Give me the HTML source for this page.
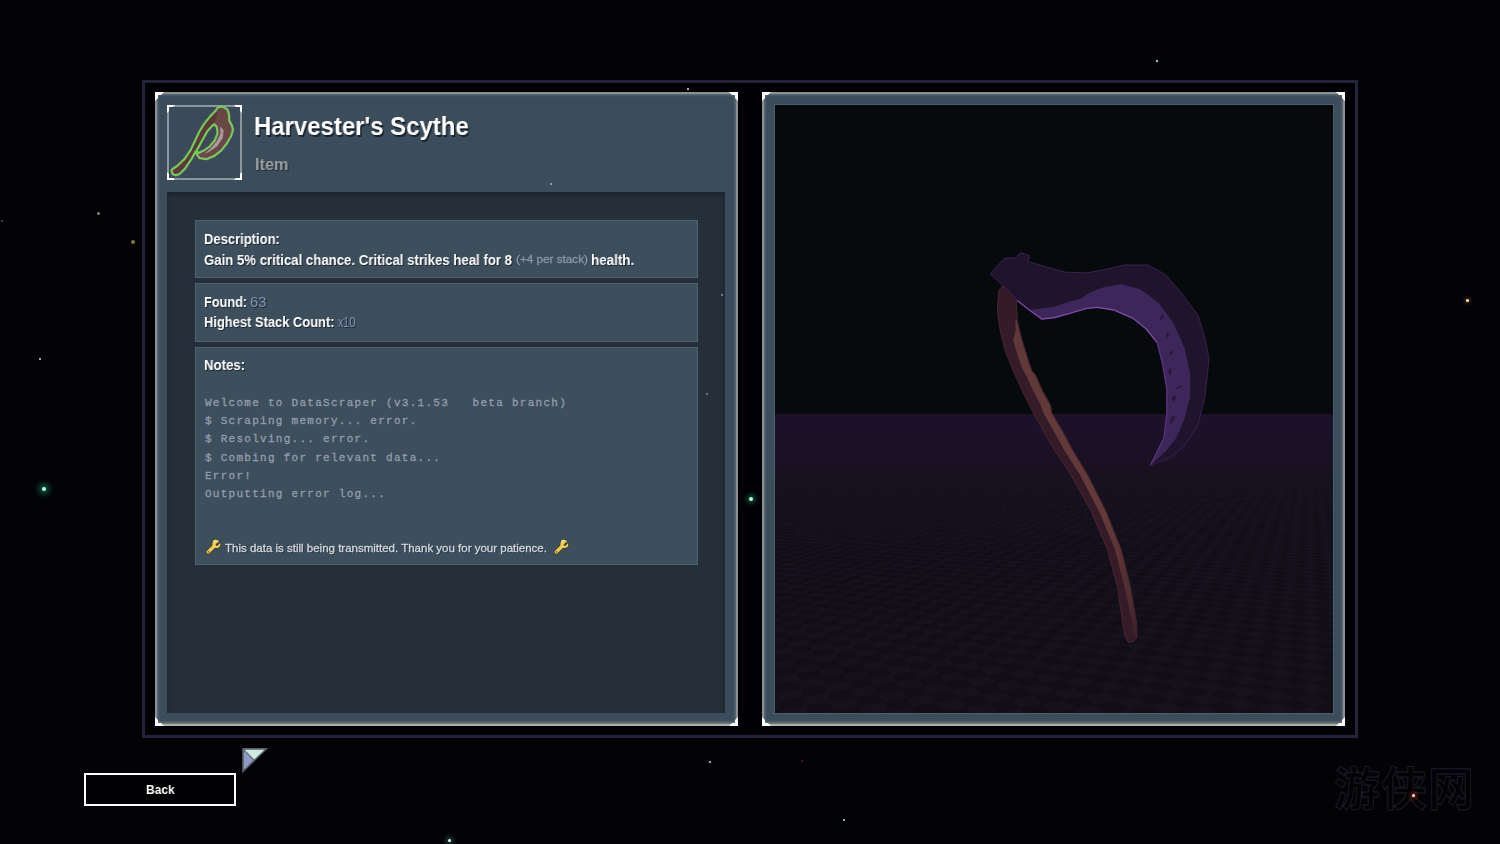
<!DOCTYPE html>
<html lang="en">
<head>
<meta charset="utf-8">
<title>Logbook - Harvester's Scythe</title>
<style>
html,body{margin:0;padding:0;}
body{width:1500px;height:844px;overflow:hidden;background:#020207;position:relative;font-family:"Liberation Sans",sans-serif;color:#fff;}
.abs{position:absolute;}
.star{position:absolute;border-radius:50%;}
#frame{left:142px;top:80px;width:1210px;height:652px;border:3px solid #23233a;background:#010105;}
.panel{top:92px;width:579px;height:630px;border:2px solid #8b9094;border-bottom-color:#b0aea6;background:#3b4c5b;box-shadow:inset 0 0 3px 1px rgba(150,158,165,.45),inset 0 -3px 3px -1px rgba(175,175,165,.35);}
#lp{left:155px;}
#rp{left:762px;}
.corner{position:absolute;width:6px;height:6px;border:0 solid #fff;}
.c-tl{left:-2px;top:-2px;border-left-width:3px;border-top-width:3px;}
.c-tr{right:-2px;top:-2px;border-right-width:3px;border-top-width:3px;}
.c-bl{left:-2px;bottom:-2px;border-left-width:3px;border-bottom-width:3px;}
.c-br{right:-2px;bottom:-2px;border-right-width:3px;border-bottom-width:3px;}
#iconbox{left:167px;top:105px;width:71px;height:71px;border:2px solid #8a97a1;background:#3a4a59;}
#title{left:255px;top:110px;font-size:26px;font-weight:bold;line-height:30px;white-space:nowrap;text-shadow:1.5px 1.5px 0 #1a2028;transform-origin:0 0;}
#sub{left:255px;top:154px;font-size:16px;line-height:20px;color:#8b8b8b;white-space:nowrap;text-shadow:1px 1px 0 #222a32;transform-origin:0 0;}
#dark{left:167px;top:192px;width:558px;height:521px;background:#242f39;box-shadow:inset 0 3px 4px rgba(0,0,0,.25);}
.box{left:195px;width:501px;border:1px solid #4d6272;background:#3d4e5d;}
.tx{will-change:transform;white-space:nowrap;font-weight:bold;line-height:1;color:#fff;transform-origin:0 0;}
.b{font-size:14.2px;text-shadow:1px 1px 0 rgba(20,28,36,.8);}
.tx.v{color:#8494b4;font-weight:normal;}
.m{position:absolute;white-space:pre;font-family:"Liberation Mono",monospace;font-size:11px;line-height:14px;letter-spacing:1.27px;color:#959dad;-webkit-text-stroke:.3px #959dad;left:205px;}
#back{left:84px;top:773px;width:148px;height:29px;border:2px solid #fff;background:#010104;}
#iconbox .corner{width:6px;height:6px;}
#iconbox .c-tl{border-left-width:2px;border-top-width:2px;}
#iconbox .c-tr{border-right-width:2px;border-top-width:2px;}
#iconbox .c-bl{border-left-width:2px;border-bottom-width:2px;}
#iconbox .c-br{border-right-width:2px;border-bottom-width:2px;}
.c-tl{clip-path:polygon(0 100%,0 0,100% 0,calc(100% - 3px) 3px,3px 3px,3px calc(100% - 3px));}
.c-tr{clip-path:polygon(100% 100%,100% 0,0 0,3px 3px,calc(100% - 3px) 3px,calc(100% - 3px) calc(100% - 3px));}
.c-bl{clip-path:polygon(0 0,0 100%,100% 100%,calc(100% - 3px) calc(100% - 3px),3px calc(100% - 3px),3px 3px);}
.c-br{clip-path:polygon(100% 0,100% 100%,0 100%,3px calc(100% - 3px),calc(100% - 3px) calc(100% - 3px),calc(100% - 3px) 3px);}
#iconbox .c-tl{clip-path:polygon(0 100%,0 0,100% 0,calc(100% - 2px) 2px,2px 2px,2px calc(100% - 2px));}
#iconbox .c-tr{clip-path:polygon(100% 100%,100% 0,0 0,2px 2px,calc(100% - 2px) 2px,calc(100% - 2px) calc(100% - 2px));}
#iconbox .c-bl{clip-path:polygon(0 0,0 100%,100% 100%,calc(100% - 2px) calc(100% - 2px),2px calc(100% - 2px),2px 2px);}
#iconbox .c-br{clip-path:polygon(100% 0,100% 100%,0 100%,2px calc(100% - 2px),calc(100% - 2px) calc(100% - 2px),calc(100% - 2px) 2px);}
</style>
</head>
<body>
<!-- stars -->
<div class="star" style="left:1156px;top:60px;width:2px;height:2px;background:#bfeee6;box-shadow:0 0 2px 0 rgba(120,220,200,.5);"></div>
<div class="star" style="left:42px;top:487px;width:4px;height:4px;background:#b8ffe0;box-shadow:0 0 6px 3px rgba(40,190,130,.55);"></div>
<div class="star" style="left:1466px;top:299px;width:3px;height:3px;background:#ffe9c0;box-shadow:0 0 4px 1px rgba(210,120,40,.6);"></div>
<div class="star" style="left:97px;top:212px;width:3px;height:3px;background:#8e8466;"></div>
<div class="star" style="left:131px;top:240px;width:4px;height:4px;background:#7d7a4a;"></div>
<div class="star" style="left:39px;top:358px;width:2px;height:2px;background:#d8d8d8;"></div>
<div class="star" style="left:709px;top:761px;width:2px;height:2px;background:#9fe0c8;box-shadow:0 0 2px 0 rgba(80,200,150,.5);"></div>
<div class="star" style="left:448px;top:839px;width:3px;height:3px;background:#e8fff4;box-shadow:0 0 5px 2px rgba(120,200,170,.4);"></div>
<div class="star" style="left:843px;top:819px;width:2px;height:2px;background:#c8f0d8;"></div>
<div class="star" style="left:1412px;top:794px;width:3px;height:3px;background:#fff0e8;box-shadow:0 0 4px 2px rgba(200,50,20,.55);"></div>
<div class="star" style="left:801px;top:760px;width:2px;height:2px;background:#5a1a1a;"></div>
<div class="star" style="left:1px;top:220px;width:2px;height:2px;background:#5a5040;"></div>

<div id="frame" class="abs"></div>

<div id="lp" class="abs panel">
  <div class="corner c-tl"></div><div class="corner c-tr"></div><div class="corner c-bl"></div><div class="corner c-br"></div>
</div>
<div id="rp" class="abs panel">
  <div class="corner c-tl"></div><div class="corner c-tr"></div><div class="corner c-bl"></div><div class="corner c-br"></div>
</div>

<div id="iconbox" class="abs">
  <div class="corner c-tl"></div><div class="corner c-tr"></div><div class="corner c-bl"></div><div class="corner c-br"></div>
</div>
<svg class="abs" style="left:162px;top:100px;" width="85" height="85" viewBox="0 0 844 844">
  <path d="M95,700 L105,685 L150,655 L225,585 L285,495 L330,400 L370,315 L420,235 L480,160 L530,110 L555,72 L605,65 L600,120 L560,200 L520,240 L500,255 L450,310 L400,400 L345,500 L335,510 L290,590 L230,680 L175,735 L135,748 L105,735 Z" fill="#5a3a34"/>
  <path d="M555,72 L605,65 L650,95 L665,140 L668,205 L695,255 L705,300 L685,360 L645,430 L590,500 L520,555 L440,588 L375,578 L348,545 L335,505 L365,525 L410,505 L475,460 L525,400 L552,330 L545,270 L520,240 L540,180 Z" fill="#6a4747"/>
  <path d="M578,262 L612,300 L603,380 L545,462 L470,515 L420,535 L480,485 L545,410 L580,335 Z" fill="#a99b9d"/>
  <path d="M348,545 L375,578 L440,588 L520,555 L590,500 L645,430 L685,360 L705,300 L695,255 L668,205 L665,140 L650,95 L605,65 L555,72 L530,110 L480,160 L420,235 L370,315 L330,400 L285,495 L225,585 L150,655 L105,685 L95,700 L105,735 L135,748 L175,735 L230,680 L290,590 L335,510 L336,509 Z M545,270 L552,330 L525,400 L475,460 L410,505 L365,525 L338,507 L345,500 L400,400 L450,310 L500,255 L520,240 Z" fill="none" stroke="#79c65c" stroke-width="22" stroke-linejoin="round"/>
</svg>

<div id="dark" class="abs"></div>
<div class="abs box" style="top:220px;height:56px;"></div>
<div class="abs box" style="top:283px;height:57px;"></div>
<div class="abs box" style="top:347px;height:216px;"></div>


<div id="title" class="abs tx" style="left:253.6px;top:111.4px;font-size:26px;transform:scaleX(.921);text-shadow:1.5px 1.5px 0 #1b222b;">Harvester's Scythe</div>
<div id="sub" class="abs tx" style="left:254.8px;top:154.8px;font-size:17px;transform:scaleX(.958);color:#9c9ea1;text-shadow:1px 1px 0 #222a33;">Item</div>
<div class="abs tx b" id="t1" style="left:204.1px;top:231.9px;transform:scaleX(.916);">Description:</div>
<div class="abs tx b" id="t2a" style="left:204.1px;top:253.0px;transform:scaleX(.930);">Gain 5% critical chance. Critical strikes heal for 8</div>
<div class="abs tx" id="t2b" style="left:516px;top:254.0px;font-size:11.5px;font-weight:normal;color:#8d97a9;-webkit-text-stroke:.3px #8d97a9;transform:scaleX(1.019);">(+4 per stack)</div>
<div class="abs tx b" id="t2c" style="left:590.7px;top:253.0px;transform:scaleX(.945);">health.</div>
<div class="abs tx b" id="t3a" style="left:204.1px;top:294.6px;transform:scaleX(.898);">Found:</div>
<div class="abs tx b v" id="t3b" style="left:249.8px;top:294.6px;transform:scaleX(1.036);">63</div>
<div class="abs tx b" id="t4a" style="left:204.1px;top:315.3px;transform:scaleX(.910);">Highest Stack Count:</div>
<div class="abs tx b v" id="t4b" style="left:338.3px;top:315.3px;transform:scaleX(.761);">x10</div>
<div class="abs tx b" id="t5" style="left:204.2px;top:357.6px;transform:scaleX(.931);">Notes:</div>
<div class="m" style="top:396px;">Welcome to DataScraper (v3.1.53   beta branch)</div>
<div class="m" style="top:414px;">$ Scraping memory... error.</div>
<div class="m" style="top:432px;">$ Resolving... error.</div>
<div class="m" style="top:451px;">$ Combing for relevant data...</div>
<div class="m" style="top:469px;">Error!</div>
<div class="m" style="top:487px;">Outputting error log...</div>

<svg class="abs" style="left:205.7px;top:539px;" width="16" height="16" viewBox="0 0 16 16">
  <g stroke="#35381c" stroke-width="1.6" stroke-linejoin="round" fill="#35381c">
    <path d="M2.3,13.1 L9.6,5.8" stroke-width="5" stroke-linecap="round" fill="none"/>
    <circle cx="10.4" cy="5" r="4"/>
  </g>
  <path d="M2.3,13.1 L9.6,5.8" stroke="#f1c94e" stroke-width="3.5" stroke-linecap="round" fill="none"/>
  <circle cx="10.4" cy="5" r="4" fill="#f3d05a"/>
  <path d="M10.3,1 A4,4 0 0 0 7.2,2.6" stroke="#fbf2b0" stroke-width="1.2" fill="none"/>
  <path d="M9.6,5.6 L13.6,1.6 L15,3.2 L11.2,7 Z" fill="#3f4f5d"/>
  <path d="M9.5,5.7 L11.3,3.9 L12.6,5.3 L11,7 Z" fill="#4b3f1c"/>
  <circle cx="2.6" cy="13" r="0.8" fill="#4a4420"/>
</svg>
<svg class="abs" style="left:553.5px;top:539px;" width="16" height="16" viewBox="0 0 16 16">
  <g stroke="#35381c" stroke-width="1.6" stroke-linejoin="round" fill="#35381c">
    <path d="M2.3,13.1 L9.6,5.8" stroke-width="5" stroke-linecap="round" fill="none"/>
    <circle cx="10.4" cy="5" r="4"/>
  </g>
  <path d="M2.3,13.1 L9.6,5.8" stroke="#f1c94e" stroke-width="3.5" stroke-linecap="round" fill="none"/>
  <circle cx="10.4" cy="5" r="4" fill="#f3d05a"/>
  <path d="M10.3,1 A4,4 0 0 0 7.2,2.6" stroke="#fbf2b0" stroke-width="1.2" fill="none"/>
  <path d="M9.6,5.6 L13.6,1.6 L15,3.2 L11.2,7 Z" fill="#3f4f5d"/>
  <path d="M9.5,5.7 L11.3,3.9 L12.6,5.3 L11,7 Z" fill="#4b3f1c"/>
  <circle cx="2.6" cy="13" r="0.8" fill="#4a4420"/>
</svg>

<div class="abs tx" id="t6" style="left:224.6px;top:543.3px;font-size:11.5px;font-weight:normal;color:#d3d7de;-webkit-text-stroke:.3px #d3d7de;text-shadow:1px 1px 0 rgba(20,28,36,.6);">This data is still being transmitted. Thank you for your patience.</div>
<div id="view" class="abs" style="left:775px;top:105px;width:558px;height:608px;background:#070a0d;overflow:hidden;outline:1px solid #4c5f6e;">
  <div id="floor" style="position:absolute;left:0;top:309px;width:558px;height:299px;background:linear-gradient(#1c1129 0,#1b1127 11%,#1a1124 16%,#18121f 21%,#16121d 45%,#15121b 100%);overflow:hidden;">
    <div style="position:absolute;left:0;top:0;width:558px;height:299px;overflow:hidden;perspective:700px;perspective-origin:279px 0;-webkit-mask-image:linear-gradient(rgba(0,0,0,0) 0,rgba(0,0,0,0) 55px,#000 105px);mask-image:linear-gradient(rgba(0,0,0,0) 0,rgba(0,0,0,0) 55px,#000 105px);">
      <div id="checker" style="position:absolute;left:-1721px;top:-3400px;width:4000px;height:4000px;transform-origin:50% 85%;transform:translateY(300px) translateZ(60px) rotateX(90deg) rotateZ(20deg);background:repeating-conic-gradient(from 45deg,rgba(0,0,0,.17) 0 25%,rgba(0,0,0,0) 0 50%) 0 0/35px 35px;"></div>
    </div>
  </div>
  <svg class="abs" style="left:0;top:0;" width="558" height="608" viewBox="775 105 558 608">
    <defs><linearGradient id="hg" gradientUnits="userSpaceOnUse" x1="0" y1="320" x2="0" y2="640"><stop offset="0" stop-color="#603839"/><stop offset=".6" stop-color="#643a39"/><stop offset=".88" stop-color="#4e2c31"/><stop offset="1" stop-color="#3a1f28"/></linearGradient></defs>
    <!-- handle -->
    <path d="M1002.4,286.0 L999.1,290.1 L998.0,300.2 L997.5,310.2 L998.6,320.3 L1000.1,330.4 L1002.5,340.5 L1005.2,350.6 L1009.0,360.6 L1013.2,370.7 L1015.0,374.8 L1022.3,390.9 L1029.3,405.0 L1033.5,413.0 L1043.5,431.2 L1054.6,450.2 L1070.8,474.4 L1091.2,511.6 L1107.2,548.8 L1117.3,586.0 L1122.8,623.2 L1125.2,637.0 L1128.5,642.5 L1133.5,641.5 L1137.0,637.0 L1136.6,623.2 L1130.3,586.0 L1121.0,548.8 L1106.1,511.6 L1087.5,474.4 L1072.7,450.2 L1062.6,431.2 L1051.8,413.0 L1050.5,405.0 L1042.5,390.9 L1035.4,374.8 L1031.8,370.7 L1028.3,360.6 L1025.3,350.6 L1022.3,340.5 L1019.6,330.4 L1017.3,320.3 L1016.8,310.2 L1016.3,300.2 L1012.0,290.1 L1008.0,286.0 Z" fill="#351b27" stroke="#4a2530" stroke-width="1" stroke-linejoin="round"/>
    <path d="M1015.4,320.3 L1015.7,330.4 L1013.2,340.5 L1016.1,350.6 L1019.4,360.6 L1023.2,370.7 L1026.0,374.8 L1033.2,390.9 L1040.7,405.0 L1043.4,413.0 L1053.8,431.2 L1064.4,450.2 L1079.8,474.4 L1099.2,511.6 L1114.7,548.8 L1124.3,586.0 L1132.5,623.2 L1133.5,637.0 L1136.4,637.0 L1136.0,623.2 L1129.7,586.0 L1120.4,548.8 L1105.5,511.6 L1086.9,474.4 L1072.1,450.2 L1062.0,431.2 L1051.2,413.0 L1049.9,405.0 L1041.9,390.9 L1034.8,374.8 L1031.2,370.7 L1027.7,360.6 L1024.7,350.6 L1021.7,340.5 L1019.0,330.4 L1016.7,320.3 Z" fill="url(#hg)"/>
    <!-- blade outer -->
    <path d="M990.1,273.8 L1004.5,258.3 L1015.2,257.8 L1020.5,252.5 L1029.6,255.7 L1028,261.5 L1044,266.3 L1065.3,272.2 L1086.6,272.9 L1102.6,270 L1124.5,265 L1147.7,265 L1165.4,274.5 L1181.8,293.6 L1198.1,315.4 L1205,338 L1209,359 L1204.9,397.2 L1198.1,424.4 L1184.5,446.2 L1170.9,457.1 L1150.4,465.3 L1164,438 L1166.8,413.5 L1166.8,389 L1162.7,364.5 L1157.2,342.7 L1146.3,329 L1132.7,318.1 L1113.6,310 L1097.3,307.4 L1086.6,308.4 L1070.6,313.2 L1054.6,317.5 L1041.8,319.1 L1028,309 L1017.3,300.4 L1002.4,285 Z" fill="#1f142b" stroke="#3a2250" stroke-width="1"/>
    <!-- bright band -->
    <path d="M1030,310 L1054.6,306.8 L1065.3,303.1 L1081.3,298.3 L1088.7,293 L1102.6,287.6 L1121.8,284 L1140.9,289.5 L1158.6,303.1 L1173.6,323.6 L1184.5,348.1 L1190,372.6 L1190,397.2 L1184.5,419 L1176.3,438 L1165.4,451.7 L1150.4,465.3 L1164,438 L1166.8,413.5 L1166.8,389 L1162.7,364.5 L1157.2,342.7 L1146.3,329 L1132.7,318.1 L1113.6,310 L1097.3,307.4 L1086.6,308.4 L1070.6,313.2 L1054.6,317.5 L1041.8,319.1 Z" fill="#3d2659"/>
    <!-- rim light on inner edge -->
    <path d="M1017.3,300.4 L1028,309 L1041.8,319.1 L1054.6,317.5 L1070.6,313.2 L1086.6,308.4 L1097.3,307.4 L1113.6,310 L1132.7,318.1 L1146.3,329 L1157.2,342.7" fill="none" stroke="#7d4aa8" stroke-width="1.3"/>
    <path d="M1157.2,342.7 L1162.7,364.5 L1166.8,389 L1166.8,413.5 L1164,438 L1150.4,465.3" fill="none" stroke="#5c337e" stroke-width="1.2"/>
    <!-- blood specks -->
    <g fill="#2c1638">
      <path d="M1160,318 l3,-4 l1,2 l-3,5z"/><path d="M1166,335 l2,-3 l1,3 l-2,3z"/><path d="M1170,352 l3,-2 l0,3 l-3,2z"/>
      <path d="M1168,372 l2,-4 l2,2 l-2,6z"/><path d="M1172,398 l3,-3 l1,3 l-3,4z"/><path d="M1170,420 l4,-5 l1,3 l-4,6z"/>
      <path d="M1176,388 l6,-3 l0,1.5 l-6,3z"/>
    </g>
  </svg>
</div>

<svg class="abs" style="left:240px;top:746px;" width="32" height="30" viewBox="240 746 32 30">
  <path d="M242.2,748.1 L268.3,748.1 L242.2,773.2 Z" fill="#566066"/>
  <path d="M244.5,749.8 L264.4,749.8 L254.2,759.6 Z" fill="#cfe8e2"/>
  <path d="M243.8,750.6 L253.4,760.2 L243.8,769.6 Z" fill="#8f9bc6"/>
</svg>
<div id="wm" class="abs" style="left:1334px;top:761px;font-family:'Liberation Sans','Noto Sans CJK SC',sans-serif;font-size:46px;line-height:56px;font-weight:bold;color:transparent;-webkit-text-stroke:1px rgba(125,125,135,.22);white-space:nowrap;letter-spacing:1px;">游侠网</div>
<div id="back" class="abs"></div>
<div class="abs tx" id="t7" style="left:145.8px;top:783.5px;font-size:12.7px;transform:scaleX(.945);">Back</div>
<div class="star" style="left:687px;top:88px;width:2px;height:2px;background:#e8e8e8;z-index:5;"></div>
<div class="star" style="left:749px;top:497px;width:4px;height:4px;background:#b0ffd8;box-shadow:0 0 5px 2px rgba(40,190,130,.5);z-index:5;"></div>
<div class="star" style="left:550px;top:183px;width:2px;height:2px;background:#a8b4bc;z-index:5;"></div>
<div class="star" style="left:721px;top:294px;width:2px;height:2px;background:#8a98a0;z-index:5;"></div>
<div class="star" style="left:706px;top:393px;width:2px;height:2px;background:#7c8a94;z-index:5;"></div>
</body>
</html>
